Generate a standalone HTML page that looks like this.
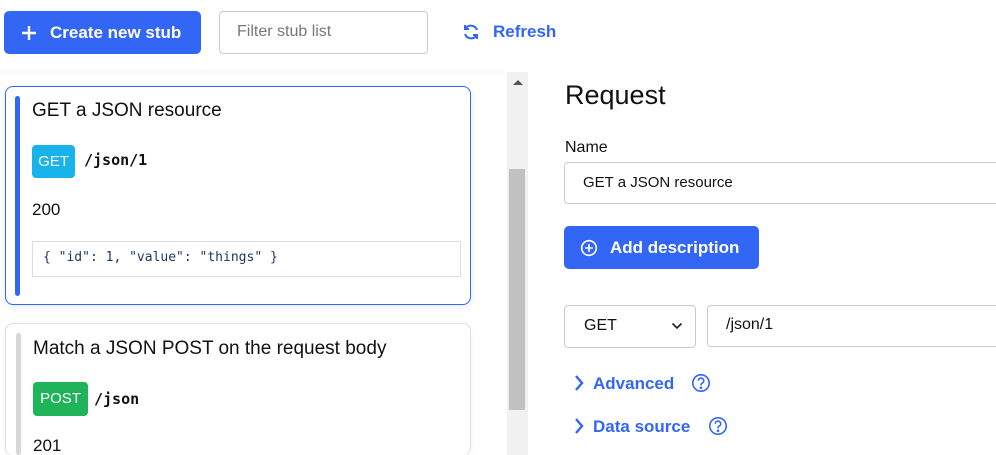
<!DOCTYPE html>
<html style="overflow:hidden;height:455px"><head><style>
*{box-sizing:border-box;margin:0;padding:0}
html,body{width:996px;height:455px;overflow:hidden}
body{background:#fff;font-family:"Liberation Sans",sans-serif;color:#111;position:relative}
.abs{position:absolute}
.btn{background:#3366f5;color:#fff;border-radius:5px;font-weight:bold;font-size:17px;display:flex;align-items:center}
.card{position:absolute;left:5px;width:466px;background:#fff;border-radius:8px;overflow:hidden}
.bar{position:absolute;left:10px;width:5px;border-radius:3px}
.mono{font-family:"DejaVu Sans Mono","Liberation Mono",monospace;font-weight:bold}
.input{position:absolute;border:1px solid #ccc;border-radius:4px;background:#fff}
.link{color:#3366f5;font-weight:bold;font-size:17px}
</style></head><body>
<div class="abs btn" style="left:4px;top:11px;width:197px;height:43px;padding-left:16px">
<svg width="18" height="18" viewBox="0 0 18 18"><path d="M9 2v14M2 9h14" stroke="#fff" stroke-width="2.4"/></svg>
<span style="margin-left:12px">Create new stub</span></div>
<div class="input" style="left:219px;top:11px;width:209px;height:43px;padding:11px 17px;color:#777;font-size:16px">Filter stub list</div>
<svg class="abs" style="left:462px;top:23px" width="18" height="18" viewBox="0 0 18 18" fill="none" stroke="#3366f5" stroke-width="2"><path d="M15 7A6.5 6.5 0 0 0 3.5 5.5M3 11a6.5 6.5 0 0 0 11.5 1.5"/><path d="M3 2v4h4M15 16v-4h-4"/></svg>
<div class="abs link" style="left:493px;top:22px">Refresh</div>
<div class="abs" style="left:0;top:70px;width:505px;height:6px;background:linear-gradient(#f4f6fb,#fff)"></div>
<div class="abs" style="left:507px;top:72px;width:21px;height:383px;background:#f1f1f1"></div>
<div class="abs" style="left:509px;top:169px;width:16px;height:241px;background:#c1c1c1"></div>
<div class="abs" style="left:513px;top:80px;width:0;height:0;border-left:5px solid transparent;border-right:5px solid transparent;border-bottom:5px solid #555"></div>

<div class="card" style="top:86px;height:219px;border:1.5px solid #3366f5;box-shadow:0 2px 8px rgba(51,102,245,.12)">
<div class="bar" style="top:9px;height:200px;left:9px;background:#3366f5"></div>
<div class="abs" style="left:26px;top:13px;font-size:19px">GET a JSON resource</div>
<div class="abs" style="left:26px;top:58px;width:43px;height:33px;background:#17b3ea;color:#fff;border-radius:4px;font-size:15px;line-height:33px;text-align:center">GET</div>
<div class="abs mono" style="left:78px;top:64px;font-size:15px">/json/1</div>
<div class="abs" style="left:26px;top:113px;font-size:17px">200</div>
<div class="abs mono" style="left:26px;top:154px;width:429px;height:36px;border:1px solid #ddd;font-size:13px;font-weight:normal;color:#1a3a66;padding:8px 10px">{ "id": 1, "value": "things" }</div>
</div>

<div class="card" style="top:323px;height:132px;border:1px solid #ddd;border-bottom:none;box-shadow:0 2px 6px rgba(0,0,0,.06)">
<div class="bar" style="top:9px;height:122px;background:#d8d8dc"></div>
<div class="abs" style="left:27px;top:14px;font-size:19px">Match a JSON POST on the request body</div>
<div class="abs" style="left:27px;top:58px;width:55px;height:34px;background:#1fb35a;color:#fff;border-radius:4px;font-size:15px;line-height:34px;text-align:center">POST</div>
<div class="abs mono" style="left:88px;top:66px;font-size:15px">/json</div>
<div class="abs" style="left:27px;top:113px;font-size:17px;line-height:18px">201</div>
</div>

<div class="abs" style="left:565px;top:80px;font-size:27px;font-weight:500">Request</div>
<div class="abs" style="left:565px;top:139px;font-size:16px">Name</div>
<div class="input" style="left:564px;top:162px;width:432px;height:42px;padding:11px 18px;font-size:15px;border-right:none;border-radius:4px 0 0 4px">GET a JSON resource</div>
<div class="abs btn" style="left:564px;top:226px;width:195px;height:43px;padding-left:16px">
<svg width="18" height="18" viewBox="0 0 18 18" fill="none" stroke="#fff" stroke-width="1.6"><circle cx="9" cy="9" r="7.3"/><path d="M9 5v8M5 9h8"/></svg>
<span style="margin-left:12px">Add description</span></div>
<div class="input" style="left:564px;top:305px;width:132px;height:43px;padding:11px 19px;font-size:16px">GET</div>
<svg class="abs" style="left:671px;top:322px" width="12" height="8" viewBox="0 0 12 8"><path d="M1.5 1.5l4.5 4.5 4.5-4.5" fill="none" stroke="#222" stroke-width="1.6"/></svg>
<div class="input" style="left:707px;top:305px;width:289px;height:42px;padding:10px 18px;font-size:16px;border-right:none;border-radius:4px 0 0 4px">/json/1</div>
<svg class="abs" style="left:574px;top:374px" width="10" height="18" viewBox="0 0 10 18"><path d="M2 2l6 7-6 7" fill="none" stroke="#3366f5" stroke-width="2.4"/></svg>
<div class="abs link" style="left:593px;top:374px">Advanced</div>
<svg class="abs" style="left:691px;top:373px" width="20" height="20" viewBox="0 0 20 20" fill="none" stroke="#3366f5" stroke-width="1.6"><circle cx="10" cy="10" r="8.2"/><path d="M7.3 7.8a2.7 2.7 0 1 1 3.6 2.5c-.6.3-.9.7-.9 1.4v.8"/><circle cx="10" cy="14.8" r=".5" fill="#3366f5"/></svg>
<svg class="abs" style="left:574px;top:417px" width="10" height="18" viewBox="0 0 10 18"><path d="M2 2l6 7-6 7" fill="none" stroke="#3366f5" stroke-width="2.4"/></svg>
<div class="abs link" style="left:593px;top:417px">Data source</div>
<svg class="abs" style="left:708px;top:416px" width="20" height="20" viewBox="0 0 20 20" fill="none" stroke="#3366f5" stroke-width="1.6"><circle cx="10" cy="10" r="8.2"/><path d="M7.3 7.8a2.7 2.7 0 1 1 3.6 2.5c-.6.3-.9.7-.9 1.4v.8"/><circle cx="10" cy="14.8" r=".5" fill="#3366f5"/></svg>
</body></html>
